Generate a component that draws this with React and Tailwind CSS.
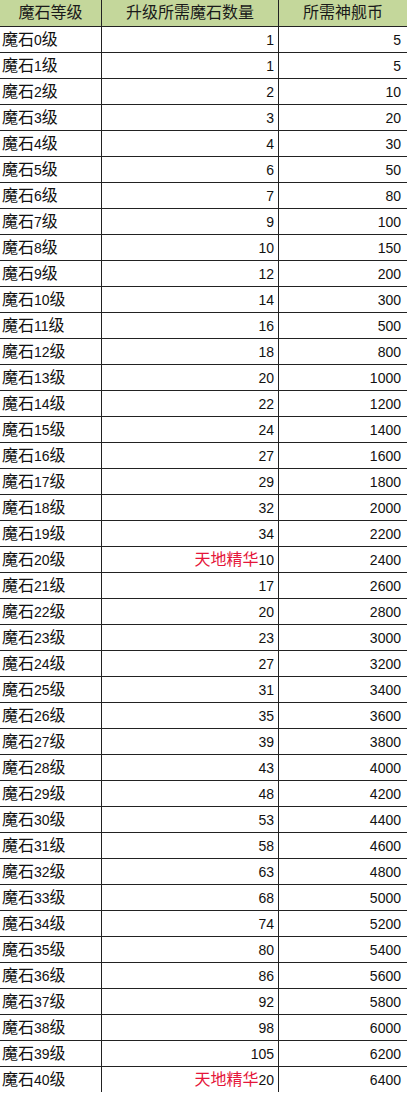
const qty = [1, 1, 2, 3, 4, 6, 7, 9, 10, 12, 14, 16, 18, 20, 22, 24, 27, 29, 32, 34, 10, 17, 20, 23, 27, 31, 35, 39, 43, 48, 53, 58, 63, 68, 74, 80, 86, 92, 98, 105, 20];
const coins = [5, 5, 10, 20, 30, 50, 80, 100, 150, 200, 300, 500, 800];

function coinFor(i) {
  if (i < coins.length) return coins[i];
  return 1000 + (i - 13) * 200;
}

export default function App() {
  return (
    <div className="w-[407px] bg-white text-[16px] text-[#111] leading-none" style={{ fontFamily: '"Liberation Sans", "Noto Sans CJK SC", sans-serif' }}>
      {/* header */}
      <div className="flex h-[26px] bg-[#c4d79b] text-[#1a1a1a]">
        <div className="w-[101px] flex items-center justify-center">魔石等级</div>
        <div className="w-[177px] border-l border-[#222] flex items-center justify-center">升级所需魔石数量</div>
        <div className="flex-1 border-l border-[#222] flex items-center justify-center">所需神舰币</div>
      </div>

      {qty.map((q, i) => (
        <div key={i} className="flex h-[26px] border-t border-[#222]">
          <div className="w-[101px] flex items-center pl-[2px]">
            魔石<span className="text-[14px]">{i}</span>级
          </div>
          <div className="w-[177px] border-l border-[#222] flex items-center justify-end pr-[4px]">
            {(i === 20 || i === 40) && <span className="text-[#e5163a]">天地精华</span>}
            <span className="text-[14px]">{q}</span>
          </div>
          <div className="flex-1 border-l border-[#222] flex items-center justify-end pr-[6px] text-[14px]">{coinFor(i)}</div>
        </div>
      ))}
    </div>
  );
}
